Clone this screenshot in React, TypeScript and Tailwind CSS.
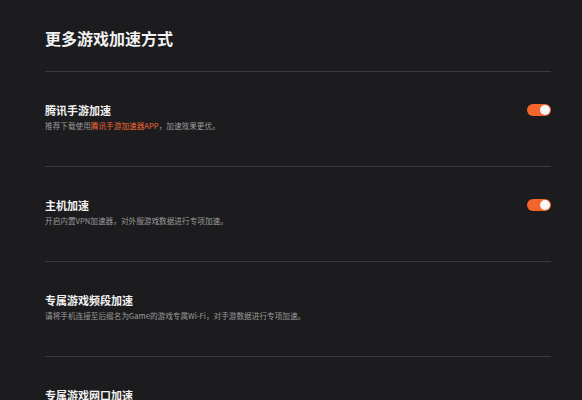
import React from "react";

const font = { fontFamily: '"Noto Sans CJK SC", "Noto Sans", sans-serif' };

function Toggle() {
  return (
    <div className="w-[24px] h-[12px] rounded-full bg-[#f2662b] flex items-center justify-end pr-[1px]">
      <div className="w-[10px] h-[10px] rounded-full bg-[#f7f7f7]" />
    </div>
  );
}

function Row({ title, sub, toggle }: { title: string; sub: React.ReactNode; toggle?: boolean }) {
  return (
    <div className="border-t border-[#3a3a3c] pt-[30px] pb-[34px]">
      <div className="flex items-center justify-between h-[16px]">
        <div className="text-[11px] leading-[16px] font-bold text-[#f2f2f2]">{title}</div>
        {toggle && <Toggle />}
      </div>
      <div className="mt-[2px] text-[7.65px] leading-[12px] text-[#9b9b9b]">{sub}</div>
    </div>
  );
}

export default function App() {
  return (
    <div className="w-[582px] h-[400px] overflow-hidden bg-[#1c1c1e] pl-[45px] pr-[31px] pt-[26px]" style={font}>
      <div className="text-[16px] leading-[24px] font-bold text-[#f2f2f2] mb-[21px]">更多游戏加速方式</div>
      <Row
        title="腾讯手游加速"
        toggle
        sub={
          <>
            推荐下载使用<span className="text-[#f0683a]">腾讯手游加速器APP</span>，加速效果更优。
          </>
        }
      />
      <Row title="主机加速" toggle sub="开启内置VPN加速器，对外服游戏数据进行专项加速。" />
      <Row title="专属游戏频段加速" sub="请将手机连接至后缀名为Game的游戏专属Wi-Fi，对手游数据进行专项加速。" />
      <Row title="专属游戏网口加速" sub="" />
    </div>
  );
}
